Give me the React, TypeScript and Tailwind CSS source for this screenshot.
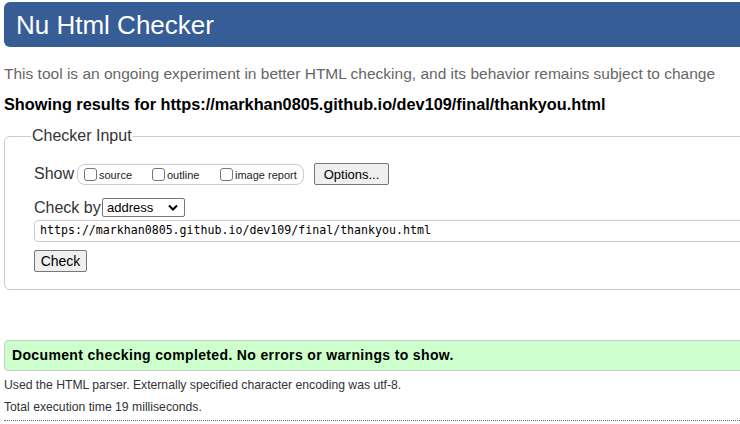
import React from "react";

function Box() {
  return <span className="inline-block w-[13px] h-[13px] border border-[#767676] rounded-[3px] bg-white" />;
}

export default function App() {
  return (
    <div className="w-[740px] h-[424px] overflow-hidden bg-white font-['Liberation_Sans',Arial,sans-serif]">
      <div className="w-[1000px] pl-[4px] pt-[2px]">
        <header className="h-[45px] bg-[#365d95] rounded-l-[6px] text-white text-[26px] pl-[12px] flex items-center leading-none">
          Nu Html Checker
        </header>
        <p className="mt-[18px] text-[15.5px] leading-[18px] text-[#666]">
          This tool is an ongoing experiment in better HTML checking, and its behavior remains subject to change
        </p>
        <p className="mt-[12px] text-[16.3px] leading-[18px] font-bold text-black">
          Showing results for https://markhan0805.github.io/dev109/final/thankyou.html
        </p>
        <fieldset className="mt-[14px] border border-[#ccc] rounded-[6px] pl-[29px] pb-[16px] h-[163px]">
          <legend className="ml-[-3px] px-[1px] text-[16px] leading-[18px] text-[#333]">Checker Input</legend>
          <div className="mt-[18px] flex items-center h-[22px]">
            <span className="text-[16px] text-[#333] w-[43px]">Show</span>
            <div className="w-[227px] h-[21px] border border-[#ccc] rounded-[8px] flex items-center pl-[6px] text-[11px] text-[#222]">
              <Box />
              <span className="ml-[2px] w-[53px] mt-[2px]">source</span>
              <Box />
              <span className="ml-[2px] w-[53px] mt-[2px]">outline</span>
              <Box />
              <span className="ml-[2px] mt-[2px]">image report</span>
            </div>
            <button className="ml-[10px] w-[75px] h-[22px] bg-[#efefef] border border-[#767676] rounded-[2px] text-[13px] text-black leading-none">
              Options...
            </button>
          </div>
          <div className="mt-[13px] flex items-center h-[19px]">
            <span className="text-[16px] text-[#333] w-[68px]">Check by</span>
            <div className="w-[83px] h-[19px] border border-[#767676] rounded-[2px] flex items-center justify-between pl-[4px] pr-[6px] text-[13px] text-black">
              <span>address</span>
              <svg width="10" height="7" viewBox="0 0 10 7">
                <path d="M1 1.5 L5 5.5 L9 1.5" stroke="#000" strokeWidth="2" fill="none" />
              </svg>
            </div>
          </div>
          <div className="mt-[3px] h-[22px] border border-[#ccc] rounded-[4px] flex items-center pl-[5px] font-['DejaVu_Sans_Mono',monospace] text-[11.6px] text-black">
            https://markhan0805.github.io/dev109/final/thankyou.html
          </div>
          <button className="mt-[8px] w-[53px] h-[22px] bg-[#efefef] border border-[#767676] rounded-[2px] text-[14px] text-black leading-none">
            Check
          </button>
        </fieldset>
        <div className="mt-[50px] h-[31px] bg-[#ccffcc] border border-[#ccc] rounded-l-[4px] flex items-center pl-[7px] text-[14px] font-bold text-black tracking-[0.35px]">
          Document checking completed. No errors or warnings to show.
        </div>
        <p className="mt-[3px] text-[12.2px] leading-[22px] text-[#333]">
          Used the HTML parser. Externally specified character encoding was utf-8.
        </p>
        <p className="text-[12.2px] leading-[22px] text-[#333]">Total execution time 19 milliseconds.</p>
        <div className="mt-[2px] border-t border-dotted border-[#666]" />
      </div>
    </div>
  );
}
